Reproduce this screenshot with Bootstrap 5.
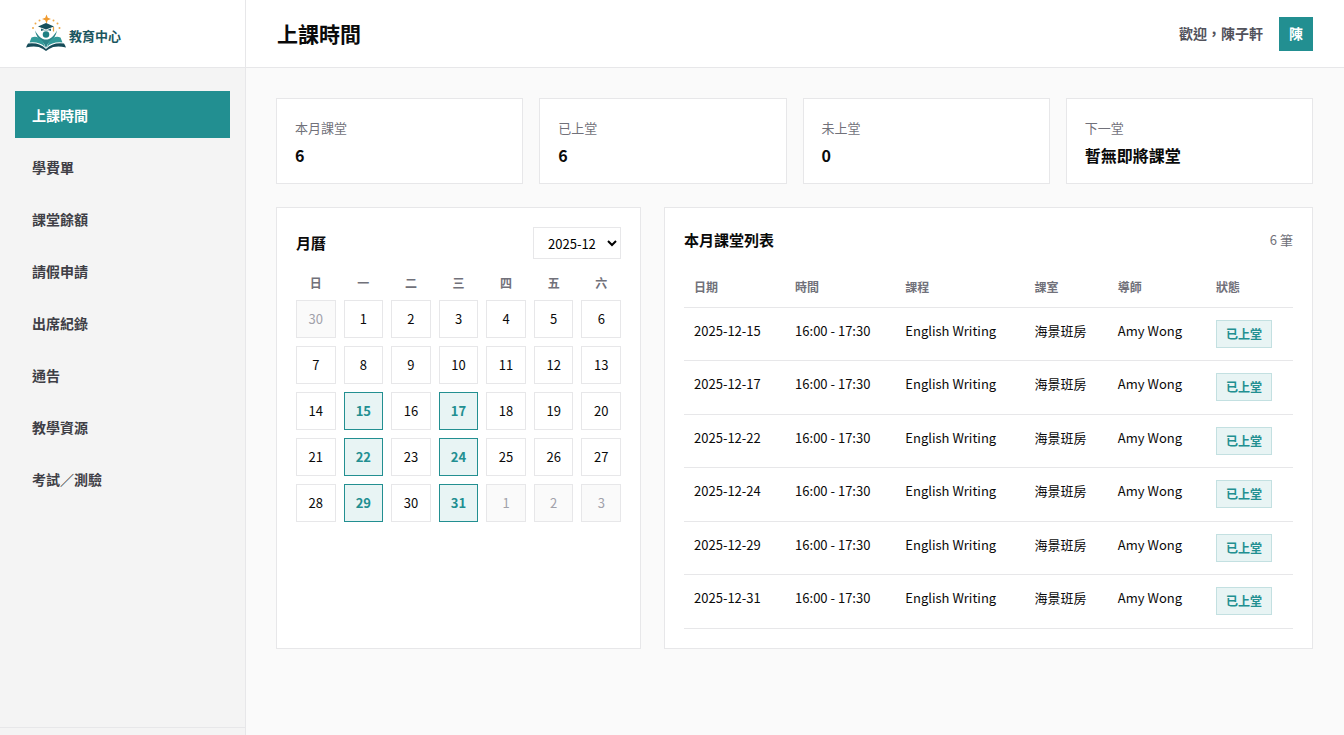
<!DOCTYPE html>
<html lang="zh-Hant">
<head>
<meta charset="utf-8">
<meta name="viewport" content="width=device-width, initial-scale=1">
<title>上課時間</title>
<link rel="stylesheet" href="https://cdn.jsdelivr.net/npm/bootstrap@5.3.0/dist/css/bootstrap.min.css">
<style>
  :root { --teal: #228f91; --line: #e7e7e9; --muted: #71717a; --ink: #0a0a0a; }
  body { font-family: "Noto Sans CJK TC", sans-serif; font-size: 13px; color: var(--ink); background: #fafafa; }
  .sidebar { width: 246px; background: #f4f4f4; border-right: 1px solid var(--line); }
  .brand { height: 68px; padding: 0 25px 2px; gap: 2px; background: #fff; border-bottom: 1px solid var(--line); color: #1b5660; font-size: 13px; font-weight: 700; text-decoration: none; }
  .brand svg { width: 42px; height: 38px; }
  .brand span { padding-top: 6px; }
  .side-menu { padding: 23px 15px; gap: 5px; }
  .side-menu .nav-link { height: 47px; padding: 0 17px; line-height: 48px; font-size: 14px; font-weight: 700; color: #3f3f46; border-radius: 0; }
  .side-menu .nav-link.active { background: var(--teal); color: #fff; }
  .side-foot { height: 8px; border-top: 1px solid var(--line); }
  .topbar { height: 68px; padding: 0 31px; background: #fff; border-bottom: 1px solid var(--line); }
  .topbar h1 { font-size: 21px; font-weight: 700; }
  .welcome { font-size: 14px; font-weight: 700; color: #52525b; }
  .avatar { width: 34px; height: 34px; background: var(--teal); color: #fff; font-size: 14px; font-weight: 700; }
  .content { padding: 30px 31px 31px 30px; }
  .stats { display: grid; grid-template-columns: repeat(4, 1fr); gap: 16px; margin-bottom: 23px; }
  .panel { background: #fff; border: 1px solid var(--line); }
  .stat { height: 86px; padding: 18px; }
  .stat dt { font-size: 13px; line-height: 22px; font-weight: 400; color: var(--muted); }
  .stat dd { font-size: 16px; line-height: 24px; font-weight: 700; margin: 4px 0 0; }
  .boards { display: grid; grid-template-columns: 9fr 16fr; gap: 23px; }
  .board { padding: 19px; }
  .board h2 { font-size: 15px; line-height: 26px; font-weight: 700; }
  .count { color: var(--muted); }
  .month { width: 88px; height: 32px; padding: 0 0 0 10px; border: 1px solid var(--line); background: #fff; color: #000; font-size: 13px; }
  .calendar { display: grid; grid-template-columns: repeat(7, 1fr); gap: 8px; text-align: center; }
  .weekday { font-size: 12px; line-height: 18px; font-weight: 700; color: var(--muted); margin-top: 15px; }
  .day { height: 38px; padding: 0; border: 1px solid var(--line); background: #fff; color: var(--ink); font-size: 13px; }
  .day.out { background: #fafafa; color: #a1a1aa; }
  .day.lesson { background: #e8f4f4; border-color: var(--teal); color: var(--teal); font-weight: 700; }
  .lesson-list { margin-top: 13px; }
  .lessons { height: 363px; }
  .lessons th { height: 41px; padding: 11px 10px 9px; font-size: 12px; line-height: 20px; font-weight: 700; color: var(--muted); border-bottom: 1px solid var(--line); }
  .lessons td { padding: 12px 10px; line-height: 22px; vertical-align: top; border-bottom: 1px solid var(--line); white-space: nowrap; }
  .lessons th:nth-child(1) { width: 16.6%; }
  .lessons th:nth-child(2) { width: 18.1%; }
  .lessons th:nth-child(3) { width: 21.2%; }
  .lessons th:nth-child(4) { width: 13.7%; }
  .lessons th:nth-child(5) { width: 16.1%; }
  .status { display: block; width: max-content; padding: 0 9px; line-height: 26px; border: 1px solid #c3e0e1; background: #e8f4f4; color: var(--teal); font-size: 12px; font-weight: 700; }
</style>
</head>
<body>
<div class="d-flex min-vh-100">
  <aside class="sidebar d-flex flex-column flex-shrink-0">
    <a class="brand d-flex align-items-center" href="#">
      <svg viewBox="0 0 84 76" aria-hidden="true">
        <path d="M43 1l2.500 6.500L52 10l-6.500 2.500L43 19l-2.500-6.500L34 10l6.500-2.500z" fill="#f09a2e"/>
        <g fill="#eda94a"><circle cx="29" cy="13" r="2"/><circle cx="57" cy="13" r="2"/><circle cx="21" cy="19" r="2"/><circle cx="65" cy="19" r="2"/><circle cx="16" cy="28" r="2"/><circle cx="69" cy="28" r="2"/></g>
        <path d="M42 18l16 7-16 6-16-6z" fill="#174f5b"/>
        <path d="M32 29l10 4 10-4v5q-10-4-20 0z" fill="#1d626c"/>
        <path d="M57 26v9" stroke="#e3a044" stroke-width="2.500"/>
        <circle cx="42" cy="41" r="6.500" fill="#1f8083"/>
        <path d="M20 33q3 15 14 22 6 5 8 13 2-8 8-13 11-7 14-22-7 13-16 17-6 2-12 0-9-4-16-17z" fill="#2b8589"/>
        <path d="M13 47q8-3 15 1 9 6 12 18-11-11-31-9z" fill="#329a99"/>
        <path d="M71 47q-8-3-15 1-9 6-12 18 11-11 31-9z" fill="#329a99"/>
        <path d="M6 59q-2 3-4 8 22-5 34 3l6 4 6-4q12-8 34-3-2-5-4-8-23-3-36 11Q29 56 6 59z" fill="#164c59"/>
      </svg>
      <span>教育中心</span>
    </a>
    <nav class="side-menu nav flex-column">
      <a class="nav-link active" href="#" aria-current="page">上課時間</a>
      <a class="nav-link" href="#">學費單</a>
      <a class="nav-link" href="#">課堂餘額</a>
      <a class="nav-link" href="#">請假申請</a>
      <a class="nav-link" href="#">出席紀錄</a>
      <a class="nav-link" href="#">通告</a>
      <a class="nav-link" href="#">教學資源</a>
      <a class="nav-link" href="#">考試／測驗</a>
    </nav>
    <div class="side-foot mt-auto"></div>
  </aside>
  <div class="flex-grow-1">
    <header class="topbar d-flex align-items-center justify-content-between">
      <h1 class="mb-0">上課時間</h1>
      <div class="d-flex align-items-center gap-3">
        <span class="welcome">歡迎，陳子軒</span>
        <span class="avatar d-flex align-items-center justify-content-center">陳</span>
      </div>
    </header>
    <main class="content">
      <section class="stats">
        <dl class="stat panel mb-0"><dt>本月課堂</dt><dd>6</dd></dl>
        <dl class="stat panel mb-0"><dt>已上堂</dt><dd>6</dd></dl>
        <dl class="stat panel mb-0"><dt>未上堂</dt><dd>0</dd></dl>
        <dl class="stat panel mb-0"><dt>下一堂</dt><dd>暫無即將課堂</dd></dl>
      </section>
      <div class="boards">
        <section class="board panel">
          <div class="d-flex align-items-center justify-content-between">
            <h2 class="mb-0"><label for="month">月曆</label></h2>
            <select class="month" id="month"><option>2025-12</option></select>
          </div>
          <div class="calendar" id="calendar"></div>
        </section>
        <section class="board panel">
          <div class="d-flex align-items-center justify-content-between">
            <h2 class="mb-0">本月課堂列表</h2>
            <span class="count">6 筆</span>
          </div>
          <div class="lesson-list table-responsive">
          <table class="lessons w-100">
            <thead><tr><th>日期</th><th>時間</th><th>課程</th><th>課室</th><th>導師</th><th>狀態</th></tr></thead>
            <tbody id="lessons"></tbody>
          </table>
          </div>
        </section>
      </div>
    </main>
  </div>
</div>
<script src="https://cdn.jsdelivr.net/npm/bootstrap@5.3.0/dist/js/bootstrap.bundle.min.js"></script>
<script>
  const lessonDays = [15, 17, 22, 24, 29, 31];
  let cells = [...'日一二三四五六'].map(d => `<div class="weekday">${d}</div>`).join('');
  for (let i = 0; i < 35; i++) {
    const out = i < 1 || i > 31;
    const n = i < 1 ? 30 : i > 31 ? i - 31 : i;
    const kind = out ? ' out' : lessonDays.includes(n) ? ' lesson' : '';
    cells += `<button type="button" class="day${kind}">${n}</button>`;
  }
  document.getElementById('calendar').innerHTML = cells;
  document.getElementById('lessons').innerHTML = lessonDays.map(d =>
    `<tr><td>2025-12-${d}</td><td>16:00 - 17:30</td><td>English Writing</td><td>海景班房</td><td>Amy Wong</td><td><span class="status">已上堂</span></td></tr>`).join('');
</script>
</body>
</html>
